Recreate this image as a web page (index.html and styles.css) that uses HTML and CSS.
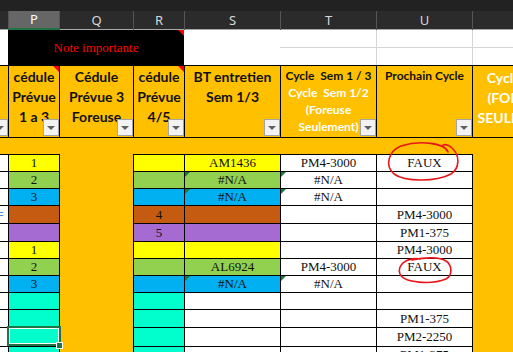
FILE: index.html
```html
<!DOCTYPE html>
<html lang="fr">
<head>
<meta charset="utf-8">
<title>Feuille</title>
<link rel="stylesheet" href="styles.css">
</head>
<body>
<div class="app">
  <div class="topbar"></div>
  <div class="colhead">
    <div class="ch"></div>
    <div class="ch on">P</div>
    <div class="ch">Q</div>
    <div class="ch">R</div>
    <div class="ch">S</div>
    <div class="ch">T</div>
    <div class="ch">U</div>
    <div class="ch"></div>
  </div>
  <div class="sheet">
    <!-- rows 1-2 -->
    <div class="w wo"></div>
    <div class="note cm">Note importante</div>
    <div class="w ws"></div>
    <div class="w wt1"></div>
    <div class="w wu1"></div>
    <div class="w wv1"></div>
    <div class="w wt2"></div>
    <div class="w wu2"></div>
    <div class="w wv2"></div>

    <!-- header row -->
    <div class="h ho"><span class="fb"></span></div>
    <div class="h hp cm">cédule<br>Prévue<br>1 a 3<span class="fb"></span></div>
    <div class="h hq">Cédule<br>Prévue 3<br>Foreuse<span class="fb"></span></div>
    <div class="h hr cm">cédule<br>Prévue<br>4/5<span class="fb"></span></div>
    <div class="h hs">BT entretien<br>Sem 1/3<span class="fb"></span></div>
    <div class="h ht small"><span class="blk">Cycle&nbsp; Sem 1 / 3</span><br>Cycle&nbsp; Sem 1/2<br>(Foreuse<br>Seulement)<span class="fb"></span></div>
    <div class="h hu small">Prochain Cycle<span class="fb"></span></div>
    <div class="h hv">Cycle&nbsp; Sem<br>(FOREUSE<br>SEULEMENT)</div>

    <div class="band"></div>

    <!-- data rows -->
    <div class="d o first"></div><div class="d p first yel">1</div><div class="d q"></div><div class="d r first yel"></div><div class="d s first yel">AM1436</div><div class="d t first">PM4-3000</div><div class="d u first">FAUX</div><div class="d v"></div>

    <div class="d o"></div><div class="d p grn">2</div><div class="d q"></div><div class="d r grn"></div><div class="d s grn err">#N/A</div><div class="d t err">#N/A</div><div class="d u"></div><div class="d v"></div>

    <div class="d o"></div><div class="d p blu">3</div><div class="d q"></div><div class="d r blu"></div><div class="d s blu err">#N/A</div><div class="d t err">#N/A</div><div class="d u"></div><div class="d v"></div>

    <div class="d o"><span class="mark">=</span></div><div class="d p brn"></div><div class="d q"></div><div class="d r brn">4</div><div class="d s brn"></div><div class="d t"></div><div class="d u">PM4-3000</div><div class="d v"></div>

    <div class="d o"></div><div class="d p pur"></div><div class="d q"></div><div class="d r pur">5</div><div class="d s pur"></div><div class="d t"></div><div class="d u">PM1-375</div><div class="d v"></div>

    <div class="d o"></div><div class="d p yel">1</div><div class="d q"></div><div class="d r yel"></div><div class="d s yel"></div><div class="d t"></div><div class="d u">PM4-3000</div><div class="d v"></div>

    <div class="d o"></div><div class="d p grn">2</div><div class="d q"></div><div class="d r grn"></div><div class="d s grn">AL6924</div><div class="d t">PM4-3000</div><div class="d u">FAUX</div><div class="d v"></div>

    <div class="d o"></div><div class="d p blu">3</div><div class="d q"></div><div class="d r blu"></div><div class="d s blu err">#N/A</div><div class="d t err">#N/A</div><div class="d u"></div><div class="d v"></div>

    <div class="d o"></div><div class="d p aq"></div><div class="d q"></div><div class="d r aq"></div><div class="d s"></div><div class="d t"></div><div class="d u"></div><div class="d v"></div>

    <div class="d o"></div><div class="d p aq"></div><div class="d q"></div><div class="d r aq"></div><div class="d s"></div><div class="d t"></div><div class="d u">PM1-375</div><div class="d v"></div>

    <div class="d o"></div><div class="d p aq sel"></div><div class="d q"></div><div class="d r aq"></div><div class="d s"></div><div class="d t"></div><div class="d u">PM2-2250</div><div class="d v"></div>

    <div class="d o"></div><div class="d p aq"></div><div class="d q"></div><div class="d r aq"></div><div class="d s"></div><div class="d t"></div><div class="d u">PM1-375</div><div class="d v"></div>
  </div>

  <svg class="ink" width="513" height="352" viewBox="0 0 513 352">
    <path d="M448 152 C445 143 420 140 401 146 C389 151 384 165 394 174 C405 182 436 182 451 174 C460 168 460 155 452 148 C449 145 446 144 443 145"/>
    <path d="M421 259 C406 257 397 265 400 274 C404 283 431 285 446 279 C453 275 452 265 446 261 C440 257 426 257 412 260"/>
  </svg>
</div>
</body>
</html>
```

FILE: styles.css
```css
html, body {
  margin: 0;
  padding: 0;
  background: #ffffff;
}
body {
  width: 513px;
  height: 352px;
  overflow: hidden;
}
.app {
  position: relative;
  width: 513px;
  height: 352px;
  overflow: hidden;
}
.topbar {
  height: 11px;
  background: #222222;
}
.colhead {
  display: grid;
  grid-template-columns: 8px 51px 74px 51px 96px 96px 96px 96px;
  height: 19px;
  background: #2b2b2b;
  border-bottom: 1px solid #a9a9a9;
  box-sizing: border-box;
  width: 568px;
}
.ch {
  box-sizing: border-box;
  border-left: 1px solid #555555;
  color: #d8d8d8;
  font: 13px "Noto Sans", "Open Sans", sans-serif;
  line-height: 18px;
  text-align: center;
}
.ch:first-child { border-left: none; }
.ch.on {
  background: #666666;
  color: #ffffff;
  border-bottom: 2px solid #217346;
  line-height: 17px;
}
.sheet {
  display: grid;
  grid-template-columns: 8px 51px 74px 51px 96px 96px 96px 96px;
  grid-template-rows: 18px 17px 73px 16px 18px 17px 17px 18px 18px 17px 17px 17px 17px 18px 19px 17px;
  width: 568px;
}
.sheet > div {
  box-sizing: border-box;
  position: relative;
  min-width: 0;
}
/* white rows */
.w { background: #ffffff; }
.wo { grid-row: span 2; }
.ws { grid-row: span 2; }
.wt1, .wu1, .wv1 { border-bottom: 1px solid #d4d4d4; }
.wu1, .wu2, .wv1, .wv2 { border-left: 1px solid #d4d4d4; }
.note {
  grid-column: span 3;
  grid-row: span 2;
  background: #000000;
  color: #ff0000;
  font: 13px "Liberation Serif", serif;
  display: flex;
  align-items: center;
  justify-content: center;
}
/* header row */
.h {
  background: #ffc000;
  border-top: 1px solid #000;
  border-bottom: 1px solid #000;
  border-left: 1px solid #000;
  font: bold 14px Lato, "Liberation Sans", sans-serif;
  color: #111111;
  line-height: 20px;
  padding-top: 1px;
  text-align: center;
  white-space: nowrap;
  overflow: hidden;
}
.ho { border-left: none; overflow: visible; }
.h.small {
  font-size: 12px;
  line-height: 17px;
  color: #ffffff;
}
.hu.small { color: #111111; }
.blk { color: #111111; }
.hv {
  color: #ffffff;
  padding-top: 2px;
}
.fb {
  position: absolute;
  right: 0;
  bottom: 1px;
  width: 16px;
  height: 17px;
  box-sizing: border-box;
  background: #f3f3f3;
  border: 1px solid #a5a5a5;
}
.fb::after {
  content: "";
  position: absolute;
  left: 3px;
  top: 6px;
  border-left: 4px solid transparent;
  border-right: 4px solid transparent;
  border-top: 4px solid #5f5f5f;
}
.cm::before {
  content: "";
  position: absolute;
  top: 0;
  right: 0;
  border-left: 6px solid transparent;
  border-top: 6px solid #ff0000;
  z-index: 2;
}
.band {
  grid-column: 1 / -1;
  background: #ffc000;
}
/* data cells */
.d {
  font: 13px "Liberation Serif", serif;
  color: #111111;
  display: flex;
  align-items: center;
  justify-content: center;
  white-space: nowrap;
  border-bottom: 1px solid #000;
  border-left: 1px solid #000;
  background: #ffffff;
}
.d.o { border-left: none; }
.d.q, .d.v {
  background: #ffc000;
  border-bottom: none;
}
.d.first { border-top: 1px solid #000; }
.yel { background: #ffff00 !important; }
.grn { background: #92d050 !important; }
.blu { background: #00b0f0 !important; }
.brn { background: #c55a11 !important; }
.pur { background: #a66bd3 !important; }
.aq { background: #00ffcc !important; }
.err::before {
  content: "";
  position: absolute;
  top: 0;
  left: 0;
  border-right: 5px solid transparent;
  border-top: 5px solid #1b7a3a;
}
.mark {
  position: absolute;
  left: -3px;
  top: 2px;
  font: 11px "Liberation Sans", sans-serif;
  color: #4a86e8;
}
.sel::after {
  content: "";
  position: absolute;
  top: -2px;
  left: -2px;
  right: -2px;
  bottom: 0;
  border: 2px solid #217346;
  box-shadow: inset 0 0 0 1px #ffffff;
  z-index: 3;
}
.sel::before {
  content: "";
  position: absolute;
  right: -4px;
  bottom: -3px;
  width: 5px;
  height: 5px;
  background: #217346;
  border: 1px solid #ffffff;
  z-index: 4;
}
.ink {
  position: absolute;
  left: 0;
  top: 0;
  pointer-events: none;
  fill: none;
  stroke: #e8161b;
  stroke-width: 1.6;
  stroke-linecap: round;
}
```
